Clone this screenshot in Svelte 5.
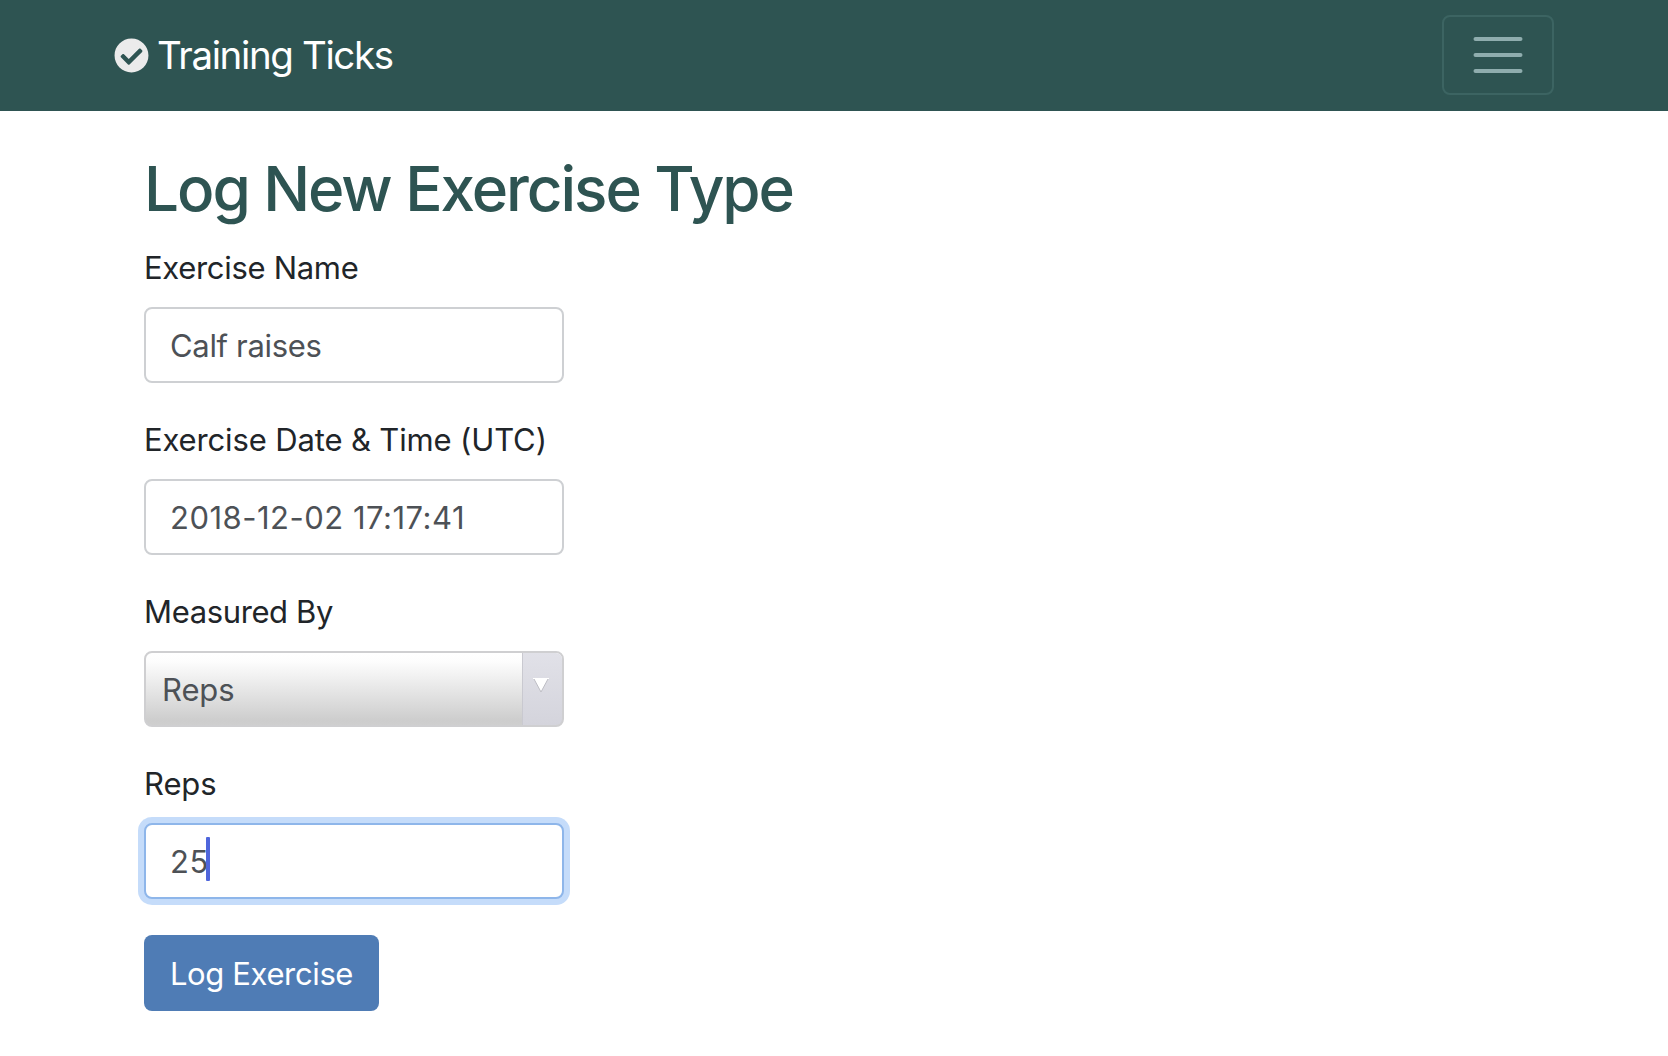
<script>
  let name = $state('Calf raises');
  let date = $state('2018-12-02 17:17:41');
  let reps = $state('25');
</script>

<nav class="navbar">
  <a class="brand" href="#home">
    <svg class="tick" viewBox="0 0 512 512" aria-hidden="true">
      <path
        fill="#ebebeb"
        d="M504 256c0 136.967-111.033 248-248 248S8 392.967 8 256 119.033 8 256 8s248 111.033 248 248zM227.314 387.314l184-184c6.248-6.248 6.248-16.379 0-22.627l-22.627-22.627c-6.248-6.249-16.379-6.249-22.628 0L216 308.118l-70.059-70.059c-6.248-6.248-16.379-6.248-22.628 0l-22.627 22.627c-6.248 6.248-6.248 16.379 0 22.627l104 104c6.249 6.249 16.379 6.249 22.628.001z"
      />
    </svg>
    <span class="brand-name">Training Ticks</span>
  </a>
  <button class="toggler" aria-label="Toggle navigation">
    <svg viewBox="0 0 60 60" aria-hidden="true">
      <path d="M7.5 14H52.5M7.5 30H52.5M7.5 46H52.5" stroke="#8fadae" stroke-width="4" stroke-linecap="round" />
    </svg>
  </button>
</nav>

<main>
  <h1>Log New Exercise Type</h1>
  <form>
    <div class="group">
      <label class="l-name" for="name">Exercise Name</label>
      <input id="name" class="control" bind:value={name} />
    </div>
    <div class="group">
      <label class="l-date" for="date">Exercise Date &amp; Time (UTC)</label>
      <input id="date" class="control digits" bind:value={date} />
    </div>
    <div class="group">
      <label class="l-measure" for="measure">Measured By</label>
      <button id="measure" type="button" class="select">
        <span class="selected">Reps</span>
        <span class="arrow">
          <svg viewBox="0 0 16 15" aria-hidden="true">
            <path d="M1 1 8 14 15 1" fill="#fff" stroke="#bdbdc4" stroke-width="1" />
            <path d="M0 .5H16" stroke="#fff" />
          </svg>
        </span>
      </button>
    </div>
    <div class="group">
      <label class="l-reps" for="reps">Reps</label>
      <div class="focus-wrap">
        <input id="reps" class="control digits focused" bind:value={reps} />
        <span class="caret"></span>
      </div>
    </div>
    <button class="submit" type="button">Log Exercise</button>
  </form>
</main>

<style>
  :global(body) {
    background: #fff;
    font-family: Inter, 'Liberation Sans', sans-serif;
    font-size: 31px;
    color: #212529;
  }
  button, input {
    box-sizing: border-box;
    margin: 0;
    font: inherit;
    letter-spacing: inherit;
  }
  .navbar {
    box-sizing: border-box;
    height: 111px;
    padding: 0 114px 1px 113.5px;
    display: flex;
    align-items: center;
    justify-content: space-between;
    background: #2e5452;
  }
  .brand {
    display: flex;
    align-items: center;
    gap: 8.5px;
    color: #fff;
    text-decoration: none;
    font-size: 38.5px;
    letter-spacing: -1.38px;
  }
  .tick {
    width: 35px;
    height: 35px;
  }
  .brand-name {
    line-height: 60px;
  }
  .toggler {
    width: 112px;
    height: 80px;
    padding: 0 24px;
    display: flex;
    align-items: center;
    justify-content: center;
    background: none;
    border: 2px solid #3c6462;
    border-radius: 8px;
  }
  .toggler svg {
    width: 60px;
    height: 60px;
    flex: none;
    fill: none;
  }
  main {
    padding: 39px 144px 0;
  }
  h1 {
    margin: 0 0 16px;
    font-size: 62px;
    line-height: 77px;
    font-weight: 500;
    letter-spacing: -2.06px;
    color: #2e5452;
  }
  form {
    width: 420px;
  }
  .group {
    margin-bottom: 32px;
  }
  label {
    display: block;
    padding-top: 1px;
    margin-bottom: 15px;
    line-height: 48px;
    white-space: nowrap;
  }
  .l-name { letter-spacing: -0.31px; }
  .l-date { letter-spacing: -0.14px; }
  .l-measure { letter-spacing: -0.37px; }
  .l-reps { letter-spacing: -0.1px; }
  .control {
    display: block;
    width: 420px;
    height: 76px;
    padding: 0 24px;
    border: 2px solid #ced0d3;
    border-radius: 8px;
    background: #fff;
    color: #4d5156;
    letter-spacing: -0.33px;
    outline: none;
  }
  .digits {
    letter-spacing: 0.5px;
  }
  .focus-wrap {
    position: relative;
  }
  .focused {
    border-color: #8eb6ea;
    box-shadow: 0 0 0 6px #c5dcfa;
  }
  .caret {
    position: absolute;
    left: 62px;
    top: 14px;
    width: 4px;
    height: 44px;
    border-radius: 1px;
    background: #4f66dc;
  }
  .select {
    width: 420px;
    height: 76px;
    padding: 0 0 0 16px;
    display: flex;
    align-items: stretch;
    justify-content: space-between;
    overflow: hidden;
    border: 2px solid #cfcfd1;
    border-radius: 8px;
    background: linear-gradient(#fff 0%, #fdfdfd 12%, #cdcdcd 94%, #cfcfcf 100%);
    color: #4d5156;
    letter-spacing: -0.1px;
    text-align: left;
  }
  .selected {
    line-height: 74px;
  }
  .arrow {
    box-sizing: border-box;
    width: 40px;
    padding-top: 25px;
    display: flex;
    justify-content: center;
    border-left: 1px solid #c9c9d0;
    background: linear-gradient(#e1e1e8, #d4d4dc);
  }
  .arrow svg {
    width: 16px;
    height: 15px;
    margin-right: 3px;
  }
  .submit {
    margin-top: 4px;
    width: 235px;
    height: 76px;
    padding: 0;
    border: 0;
    border-radius: 8px;
    background: #4f7cb5;
    color: #fff;
    letter-spacing: -0.37px;
    white-space: nowrap;
  }
</style>
